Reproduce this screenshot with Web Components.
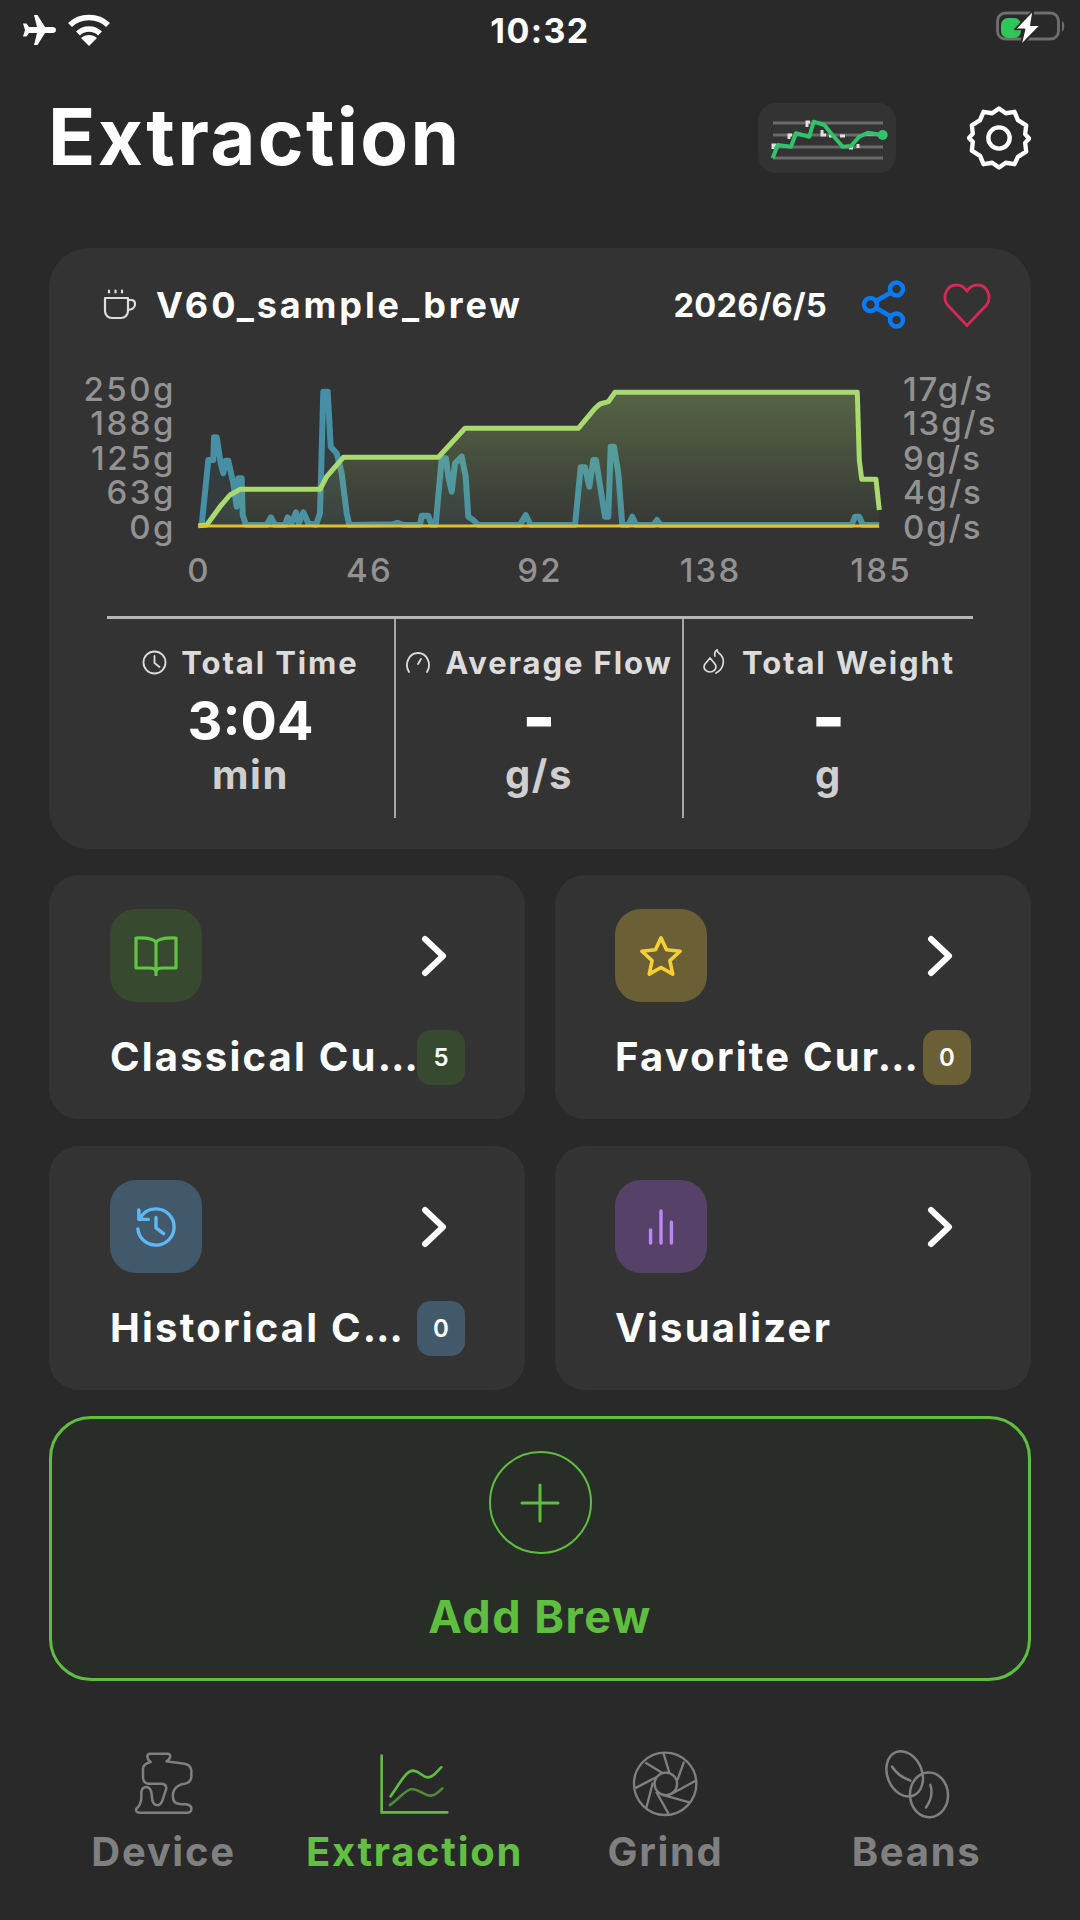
<!doctype html>
<html><head><meta charset="utf-8"><style>
html,body{margin:0;padding:0;background:#292929;width:1080px;height:1920px;overflow:hidden;font-family:"Inter","Liberation Sans",sans-serif;color:#fff}
</style></head><body>
<app-screen></app-screen>
<script>
const FONT='"Inter","Liberation Sans",sans-serif';
function el(name,html,css){customElements.define(name,class extends HTMLElement{constructor(){super();this.attachShadow({mode:'open'}).innerHTML=`<style>${css}</style>`+(typeof html==='function'?html(this):html)}})}
const ico={
plane:`<svg width="36" height="32" viewBox="0 0 36 32"><path fill="#fff" d="M14 1h3.5l7.5 12h7.5c2 0 3.500 1.300 3.500 3s-1.500 3-3.500 3H25L17.500 31H14l3-12H9l-2.500 3.500H3L5 16 3 9.500h3.500L9 13h8z"/></svg>`,
wifi:`<svg width="44" height="34" viewBox="0 0 44 34" fill="none" stroke="#fff" stroke-width="5.500"><path d="M3 12C13 2 31 2 41 12"/><path d="M11 20.500c6-6 16-6 22 0"/><path fill="#fff" stroke="none" d="M22 33l-8-8c4.500-4 11.500-4 16 0z"/></svg>`,
batt:`<svg width="72" height="40" viewBox="0 0 72 40"><rect x="1.500" y="5" width="61" height="26" rx="8" fill="none" stroke="#6f6f6f" stroke-width="2.800"/><path d="M66 13c3 1.500 3 9 0 10.500z" fill="#6f6f6f"/><rect x="5" y="10" width="20" height="20" rx="7" fill="#30c75a"/><path fill="#fff" stroke="#292929" stroke-width="1.800" stroke-linejoin="round" d="M37.500 2 19 21.300h9.500L24.500 38 45 17H35z"/></svg>`,
chart:`<svg width="138" height="70" viewBox="0 0 138 70"><rect width="138" height="70" rx="18" fill="#333"/><g stroke="#6a6a6a" stroke-width="3"><path d="M15 20h110M15 32h110M15 44h110M15 55h110"/></g><path d="M15 46v-4h3M31 36v-4h3M49 24v-5h3M64 27v5h4M71 33h4M82 33h5M91 45h4M100 45v-4M108 31h8" stroke="#e0e0e0" stroke-width="3" fill="none"/><path d="M14.700 55.300 19.700 42 33 43.700 38 30.300 51.300 33.700 55.700 18.700 66.300 22 73 30.300 84.700 43.700 93 43 101.300 33.700 109.700 29.700 124.700 32" fill="none" stroke="#2fc46a" stroke-width="4" stroke-linejoin="round"/><circle cx="124.700" cy="32" r="5" fill="#2fc46a"/></svg>`,
gear:`<svg width="64" height="64" viewBox="0 0 66 66" fill="none" stroke="#fff" stroke-width="4.500" stroke-linejoin="round"><path d="M33 2.500l7 5 9-1.500 3.500 8.500L61 20l-1 9 4 4.500-4 4.500 1 9-8.500 5.500L49 60l-9-1.500-7 5-7-5-9 1.500-3.500-8.500L5 46l1-9-4-4 4-4.500L5 20l8.500-5.500L17 6l9 1.500z"/><circle cx="33" cy="33" r="11"/></svg>`,
cup:`<svg width="34" height="32" viewBox="0 0 34 32" fill="none" stroke="#ddd" stroke-width="2.200" stroke-linecap="round" stroke-linejoin="round"><path d="M6 1.500v2M12.500 1.500v2M19 1.500v2"/><path d="M2 9h23v13c0 4-3 7-7 7H9c-4 0-7-3-7-7z"/><path d="M25 11h3c2.500 0 4 1.500 4 4s-2 5-4.500 5.500L25 21"/></svg>`,
share:`<svg width="46" height="50" viewBox="0 0 46 50" fill="none" stroke="#0a7bf5" stroke-width="4.500"><circle cx="35.500" cy="9" r="6.500"/><circle cx="9.500" cy="24.500" r="6.500"/><circle cx="35.500" cy="40" r="6.500"/><path d="M15 21 30 12.500M15 28 30 36.500"/></svg>`,
heart:`<svg width="48" height="45" viewBox="0 0 48 45" fill="none" stroke="#d52a58" stroke-width="2.800"><path d="M24 42.500 4.500 22C-1 15 3 2 13.500 2 18.500 2 22 5 24 8c2-3 5.500-6 10.500-6C45 2 49 15 43.500 22z"/></svg>`,
clock:`<svg width="25" height="25" viewBox="0 0 25 25" fill="none" stroke="#ddd" stroke-width="1.800" stroke-linecap="round"><circle cx="12.500" cy="12.500" r="11"/><path d="M12.500 6v7l5 4"/></svg>`,
gauge:`<svg width="26" height="25" viewBox="0 0 26 25" fill="none" stroke="#ddd" stroke-width="1.800" stroke-linecap="round"><path d="M4 22C-1 14 4 3 13 3s14 11 9 19"/><path d="M13 14l3-5"/></svg>`,
drops:`<svg width="26" height="28" viewBox="0 0 26 28" fill="none" stroke="#ddd" stroke-width="1.700" stroke-linecap="round" stroke-linejoin="round"><path d="M8 10l-5 6c-3 5 2 8 5 8s8-3 5-8z"/><path d="M15 2c0 2 2 3 4 5 4 5 3 14-5 18"/><path d="M13 8c-1-2 0-5 2-6"/></svg>`,
book:`<svg width="44" height="40" viewBox="0 0 44 40" fill="none" stroke="#62c347" stroke-width="3.200" stroke-linejoin="round" stroke-linecap="round"><path d="M22 6C19 2.500 12 1.500 2 2v30h14c3 0 5 .8 6 2.500 1-1.700 3-2.500 6-2.500h14V2C32 1.500 25 2.500 22 6z"/><path d="M22 6v33"/></svg>`,
star:`<svg width="44" height="42" viewBox="0 0 46 44" fill="none" stroke="#f6cf33" stroke-width="3.800" stroke-linejoin="round"><path d="M23 3 28.800 15.500 43 17 32.300 26.800 35.300 41 23 34 10.700 41 13.700 26.800 3 17 17.200 15.500z"/></svg>`,
hist:`<svg width="40" height="40" viewBox="0 0 42 42" fill="none" stroke="#5fb8f5" stroke-width="3.600" stroke-linecap="round" stroke-linejoin="round"><path d="M3 3v10h10"/><path d="M4 13C7 6 13 2 21 2c11 0 19 9 19 19s-8 19-19 19C11 40 3 33 2 23"/><path d="M21 11v11l8 6"/></svg>`,
bars:`<svg width="30" height="36" viewBox="0 0 30 38" fill="none" stroke="#bb86f5" stroke-width="3.600" stroke-linecap="round"><path d="M4 22v14M15 2v34M26 14v22"/></svg>`,
chev:`<svg width="26" height="42" viewBox="0 0 26 42" fill="none" stroke="#fff" stroke-width="6" stroke-linecap="round" stroke-linejoin="round"><path d="M4 4 22 21 4 38"/></svg>`,
plus:`<svg width="40" height="40" viewBox="0 0 40 40" stroke="#5fbe3f" stroke-width="3" stroke-linecap="round"><path d="M20 2v36M2 20h36"/></svg>`,
device:`<svg width="60" height="64" viewBox="38 30 180 192" fill="none" stroke="#808080" stroke-width="7.500" stroke-linejoin="round"><path d="M85 35H140Q148 36 146 46 144 54 135 58L190 65Q208 68 210 85V105Q208 122 190 125 168 127 158 145 150 165 160 180 168 188 195 187 212 190 210 203 208 212 195 212H55Q42 212 45 200 58 190 60 170V150Q62 135 75 135 85 135 90 150L93 175Q97 190 110 190 120 188 125 170L135 140Q135 125 120 125H80Q65 122 65 105V80Q66 65 88 60 78 52 78 44 78 36 85 35Z"/></svg>`,
extr:`<svg width="71" height="62" viewBox="775 32 213 186" fill="none" stroke-linecap="round"><path d="M783 40V210H980" stroke="#5fbe3f" stroke-width="8"/><path d="M810 162C840 120 855 85 878 85C900 88 905 105 922 105C940 105 950 85 962 75" stroke="#5fbe3f" stroke-width="8"/><path d="M808 188C830 175 855 140 875 140C900 143 912 160 930 160C945 160 955 148 965 138" stroke="#4b8d37" stroke-width="8"/></svg>`,
grind:`<svg width="69" height="69" viewBox="32 20 208 208" fill="none" stroke="#808080" stroke-width="7"><circle cx="135" cy="122" r="94"/><circle cx="137" cy="122" r="34"/><path d="M130 30 148 90M192 55 172 110M228 112 155 152M208 178 130 156M145 212 108 146M78 195 98 118M45 135 108 102M75 58 128 90"/></svg>`,
beans:`<svg width="70" height="72" viewBox="785 15 210 215" fill="none" stroke="#808080" stroke-width="7.500" stroke-linecap="round"><ellipse cx="853" cy="92" rx="52" ry="70" transform="rotate(-22 853 92)"/><ellipse cx="926" cy="155" rx="57" ry="67" transform="rotate(-3 926 155)"/><path d="M815 70C830 95 850 105 870 112M930 125C938 150 930 175 917 193"/></svg>`
};
el('status-bar',`<div class="l">${ico.plane}${ico.wifi}</div><div class="t">10:32</div><div class="r">${ico.batt}</div>`,
`:host{display:grid;grid-template-columns:1fr auto 1fr;align-items:center;height:60px;padding:0 20px;font-family:${FONT}}
.l{display:flex;align-items:center;gap:11px}.t{font-size:34px;font-weight:700;letter-spacing:1.4px}.r{justify-self:end;display:flex;margin:-4px -8px 0 0}svg{display:block}`);
el('page-head',`<h1>Extraction</h1><span class="c">${ico.chart}</span><span class="g">${ico.gear}</span>`,
`:host{display:flex;align-items:center;height:136px}
h1{margin:-2px 0 0 -1px;flex:1;font:700 78px/1 ${FONT};letter-spacing:2.3px}
.c{margin-right:71px;display:flex}.g{display:flex}`);
el('flow-chart',()=>{
 const a=(p,ox)=>p.map(([x,y])=>[ox+x/3,260+y/3]);
 const w=[...a([[415,797],[440,795],[480,740],[510,705],[540,688],[780,688],[800,650],[850,592],[1135,592],[1215,505]],60),...a([[115,505],[165,445],[180,432],[205,425],[225,397],[952,397],[958,600],[965,658],[1008,658],[1018,750]],540)];
 const f=[...a([[425,795],[445,600],[460,600],[462,532],[470,532],[482,610],[490,640],[497,602],[505,602],[520,670],[530,740],[535,655],[545,655],[548,765],[558,795],[620,795],[633,772],[645,795],[675,795],[683,772],[695,788],[708,757],[716,790],[730,757],[745,790],[768,795],[780,760],[790,395],[803,395],[812,560],[830,580],[845,640],[860,760],[868,795],[1000,793],[1012,788],[1030,795],[1080,795],[1085,767],[1105,767],[1115,795],[1127,795],[1145,595],[1158,595],[1165,650],[1175,695],[1185,610],[1205,590],[1217,650],[1225,770],[1240,780],[1255,795],[1380,795],[1397,765],[1412,795]],60),...a([[0,795],[105,795],[122,622],[135,622],[148,680],[160,600],[168,600],[195,770],[205,770],[212,560],[222,560],[235,640],[247,795],[265,795],[277,770],[288,795],[340,795],[351,780],[362,795],[935,795],[945,770],[958,770],[968,795],[1018,795]],540)];
 const s=p=>p.map(q=>q[0].toFixed(1)+' '+q[1].toFixed(1)).join(' L');
 const X0=49,Y0=350;
 const tr=p=>p.map(([x,y])=>[x-X0,y-Y0]);
 const ws=s(tr(w)),fs=s(tr(f));
 const yl=['250g','188g','125g','63g','0g'].map(t=>`<span>${t}</span>`).join('');
 const yr=['17g/s','13g/s','9g/s','4g/s','0g/s'].map(t=>`<span>${t}</span>`).join('');
 const xl=['0','46','92','138','185'].map(t=>`<span>${t}</span>`).join('');
 return `<div class="plot"><div class="yl">${yl}</div><svg width="982" height="190" viewBox="0 0 982 190" fill="none">
 <defs><linearGradient id="a" x1="0" y1="42" x2="0" y2="176" gradientUnits="userSpaceOnUse"><stop offset="0" stop-color="#a8d86e" stop-opacity=".3"/><stop offset="1" stop-color="#a8d86e" stop-opacity=".03"/></linearGradient></defs>
 <path d="M${fs} Z" fill="#4a98a8" fill-opacity=".1"/>
 <path d="M${fs}" stroke="#468fa4" stroke-width="6" stroke-linejoin="round"/>
 <path d="M${ws} L830 176 Z" fill="url(#a)"/>
 <path d="M${ws}" stroke="#a9da70" stroke-width="5" stroke-linejoin="round"/>
 <path d="M149 176H830" stroke="#e6c01f" stroke-width="3"/></svg><div class="yr">${yr}</div></div><div class="xl">${xl}</div>`},
`:host{display:block;position:relative;height:258px;font:500 33px/1 ${FONT};color:#929292}
.plot{position:relative;height:190px}svg{position:absolute;left:0;top:0;display:block}
.yl,.yr{position:absolute;top:22px;display:grid;grid-auto-rows:34.500px;align-items:center}
.yl{right:855px;justify-items:end;letter-spacing:2.500px}.yr{left:854px;letter-spacing:1.9px}
.xl{display:flex;justify-content:space-between;position:absolute;left:150px;width:682px;top:204px}
.xl span{width:0;display:flex;justify-content:center;white-space:nowrap;letter-spacing:2.200px}`);
el('stat-cell',t=>{const v=t.getAttribute('value');return `<div class="lb"><slot name="i"></slot><span>${t.getAttribute('label')}</span></div><div class="v${v==='-'?' d':''}">${v}</div><div class="u">${t.getAttribute('unit')}</div>`},
`:host{display:flex;flex-direction:column;align-items:center;min-width:0;height:199px;box-sizing:border-box;padding-top:25px;font-family:${FONT};border-left:2px solid #a6a6a6}
:host(:first-child){border-left:0}
.lb{display:flex;align-items:center;gap:14px;height:36px;font-size:31px;font-weight:700;color:#dcdcdc;white-space:nowrap;letter-spacing:1.900px}
.v{font-size:54px;font-weight:700;line-height:64px;margin-top:9px;height:64px}
.v.d{font-size:72px;font-weight:800;line-height:56px}
.u{font-size:40px;font-weight:700;color:#cfcfcf;line-height:48px;margin-top:-2px;letter-spacing:1.600px}`);
el('brew-card',t=>`<header>${ico.cup}<b>V60_sample_brew</b><i>2026/6/5</i>${ico.share}${ico.heart}</header><flow-chart></flow-chart>
<div class="stats"><stat-cell label="Total Time" value="3:04" unit="min"><span slot="i" style="display:flex">${ico.clock}</span></stat-cell><stat-cell label="Average Flow" value="-" unit="g/s"><span slot="i" style="display:flex">${ico.gauge}</span></stat-cell><stat-cell label="Total Weight" value="-" unit="g"><span slot="i" style="display:flex">${ico.drops}</span></stat-cell></div>`,
`:host{display:block;background:#333;border-radius:40px;height:601px;font-family:${FONT};box-sizing:border-box}
header{display:flex;align-items:center;height:102px;box-sizing:border-box;padding:12px 40px 0 54px}
b{font-size:36px;font-weight:700;margin-left:19px;flex:1;letter-spacing:2.900px}
i{font-style:normal;font-size:32.500px;font-weight:700;margin-right:34px;letter-spacing:.3px}
header svg:nth-of-type(3){margin-left:36px}
flow-chart{display:block}
.stats{margin:8px 58px 0;border-top:3px solid #b5b5b5;display:grid;grid-template-columns:287px 288px 1fr}`);
el('menu-card',t=>{const b=t.getAttribute('badge');return `<div class="top"><div class="tile" style="background:${t.getAttribute('tile')}"><slot></slot></div><span class="ch">${ico.chev}</span></div><div class="bot"><span class="txt">${t.getAttribute('label')}</span>${b!==null?`<span class="bd" style="background:${t.getAttribute('tile')}">${b}</span>`:''}</div>`},
`:host{display:block;background:#333;border-radius:30px;height:244px;padding:34px 60px 0 61px;box-sizing:border-box;font-family:${FONT}}
:host(:nth-child(even)){padding-left:60px}
.top{display:flex;justify-content:space-between;align-items:center;height:93px}
.tile{width:92px;height:93px;border-radius:26px;display:flex;align-items:center;justify-content:center}
.ch{display:flex;margin-right:18px}
.bot{display:flex;align-items:center;margin-top:28px;height:55px}
.txt{flex:1;min-width:0;font-size:40px;font-weight:700;white-space:nowrap;letter-spacing:2.200px;padding-bottom:3px}
.bd{width:48px;height:55px;border-radius:14px;display:flex;align-items:center;justify-content:center;font-size:24px;font-weight:600}`);
el('menu-grid',`<slot></slot>`,`:host{display:grid;grid-template-columns:476px 476px;column-gap:30px;row-gap:27px}`);
el('add-brew',`<div class="c">${ico.plus}</div><div class="t">Add Brew</div>`,
`:host{display:flex;flex-direction:column;align-items:center;height:265px;box-sizing:border-box;border:3px solid #5fbe3f;border-radius:42px;background:#282d28;padding-top:32px;font-family:${FONT}}
.c{width:103px;height:103px;box-sizing:border-box;border:2.500px solid #5fbe3f;border-radius:50%;display:flex;align-items:center;justify-content:center}
.t{margin-top:38px;font-size:45px;font-weight:700;color:#5fbe3f;line-height:50px;letter-spacing:1.500px}`);
el('nav-item',t=>`<slot></slot><span>${t.getAttribute('label')}</span>`,
`:host{display:flex;flex-direction:column;align-items:center;width:251px;font-family:${FONT};color:#808080}
:host([on]){color:#62bf42}
::slotted(*){display:flex;height:72px;align-items:center}
span{font-size:40px;font-weight:700;line-height:44px;margin-top:10px;letter-spacing:1.700px}`);
el('bottom-nav',`<slot></slot>`,`:host{display:flex;padding:0 0 0 38px;height:126px}`);
el('app-screen',`<status-bar></status-bar><main><page-head></page-head><brew-card></brew-card>
<menu-grid>
<menu-card label="Classical Cu…" badge="5" tile="#37492f"><span style="display:flex">${ico.book}</span></menu-card>
<menu-card label="Favorite Cur…" badge="0" tile="#6a5f35"><span style="display:flex">${ico.star}</span></menu-card>
<menu-card label="Historical C…" badge="0" tile="#41596b"><span style="display:flex">${ico.hist}</span></menu-card>
<menu-card label="Visualizer" tile="#564168"><span style="display:flex">${ico.bars}</span></menu-card>
</menu-grid><add-brew></add-brew></main>
<bottom-nav><nav-item label="Device"><span>${ico.device}</span></nav-item><nav-item label="Extraction" on><span>${ico.extr}</span></nav-item><nav-item label="Grind"><span>${ico.grind}</span></nav-item><nav-item label="Beans"><span>${ico.beans}</span></nav-item></bottom-nav>`,
`:host{display:block;width:1080px;height:1920px;background:#292929;overflow:hidden}
main{padding:10px 49px 0}
brew-card{margin-top:42px}
menu-grid{margin-top:26px}
add-brew{margin-top:26px}
bottom-nav{margin-top:67px}`);
</script>
</body></html>
